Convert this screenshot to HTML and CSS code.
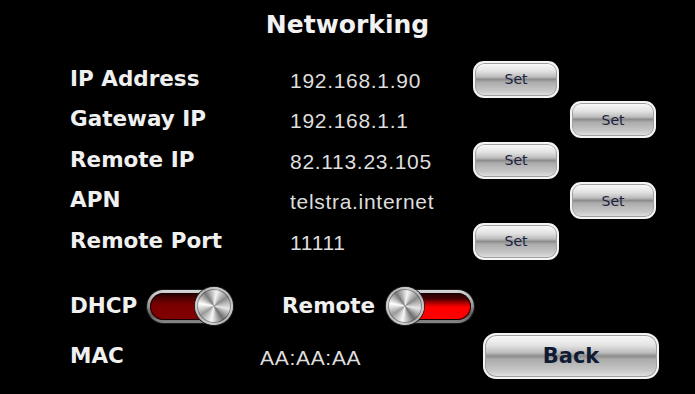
FILE: index.html
```html
<!DOCTYPE html>
<html>
<head>
<meta charset="utf-8">
<link rel="stylesheet" href="styles.css">
</head>
<body>
<div class="screen">
  <h1 class="title">Networking</h1>
  <div class="rows">
    <div class="label">IP Address</div><div class="value">192.168.1.90</div><div class="cell c1"><button class="btn">Set</button></div><div class="cell c2"></div>
    <div class="label">Gateway IP</div><div class="value">192.168.1.1</div><div class="cell c1"></div><div class="cell c2"><button class="btn">Set</button></div>
    <div class="label">Remote IP</div><div class="value">82.113.23.105</div><div class="cell c1"><button class="btn">Set</button></div><div class="cell c2"></div>
    <div class="label">APN</div><div class="value">telstra.internet</div><div class="cell c1"></div><div class="cell c2"><button class="btn">Set</button></div>
    <div class="label">Remote Port</div><div class="value">11111</div><div class="cell c1"><button class="btn">Set</button></div><div class="cell c2"></div>
  </div>
  <div class="toggles">
    <div class="label tl-dhcp">DHCP</div>
    <div class="toggle on-right">
      <div class="track"><div class="fill dark"></div></div>
      <div class="knob"></div>
    </div>
    <div class="label tl-remote">Remote</div>
    <div class="toggle on-left">
      <div class="knob"></div>
      <div class="track"><div class="fill bright"></div></div>
    </div>
  </div>
  <div class="bottom">
    <div class="label mac">MAC</div>
    <div class="value macval">AA:AA:AA</div>
    <button class="back">Back</button>
  </div>
</div>
</body>
</html>
```
FILE: styles.css
```css
html, body {
  margin: 0;
  padding: 0;
  background: #000;
}
.screen {
  width: 695px;
  height: 394px;
  background: #000;
  overflow: hidden;
}
.title {
  margin: 0;
  height: 60px;
  box-sizing: border-box;
  padding-top: 12px;
  text-align: center;
  font: bold 25px/25px "DejaVu Sans", sans-serif;
  color: #f2f2f2;
}
.rows {
  display: grid;
  grid-template-columns: 220px 183px 97px 86px;
  grid-auto-rows: 40.5px;
  padding-left: 70px;
  align-items: center;
}
.label {
  font: bold 21.5px/24px "DejaVu Sans", sans-serif;
  color: #f0f0f0;
  margin-bottom: 3px;
  white-space: nowrap;
}
.value {
  font: 21px/24px "Liberation Sans", sans-serif;
  color: #dedede;
  white-space: nowrap;
  letter-spacing: 0.7px;
  margin-top: 1px;
}
.cell {
  display: flex;
  align-items: center;
  height: 40.5px;
}
.btn {
  width: 86px;
  height: 37px;
  box-sizing: border-box;
  margin: 0 0 2px 0;
  padding: 0;
  border: 2px solid #f4f4f4;
  border-radius: 11px;
  background: linear-gradient(to bottom, #fbfbfb 0%, #e2e2e2 25%, #bdbdbd 42%, #8c8c8c 50%, #acacac 58%, #c8c8c8 85%, #e4e4e4 100%);
  box-shadow: inset 0 0 0 1px #a0a0a0;
  font: 14px "DejaVu Sans", sans-serif;
  color: #1b2140;
  display: flex;
  align-items: center;
  justify-content: center;
}
.toggles {
  display: flex;
  align-items: center;
  height: 44px;
  margin-top: 21.5px;
  padding-left: 70px;
}
.tl-dhcp {
  width: 77px;
  margin-bottom: 0;
}
.tl-remote {
  width: 104px;
  margin-left: 48px;
  margin-bottom: 0;
}
.toggle {
  display: flex;
  align-items: center;
  width: 87px;
  height: 40px;
}
.track {
  width: 78px;
  height: 33px;
  box-sizing: border-box;
  padding: 3px;
  border-radius: 17px;
  background: linear-gradient(to bottom, #d8d8d8 0%, #9a9a9a 45%, #5a5a5a 75%, #8a8a8a 100%);
  box-shadow: 0 0 0 1px #1a1a1a;
  flex-shrink: 0;
}
.fill {
  height: 100%;
  border-radius: 14px;
  box-shadow: inset 0 0 0 1px #1a0000;
}
.fill.dark {
  background: linear-gradient(to bottom, #220000 0%, #5a0000 25%, #7c0000 45%, #820000 100%);
}
.fill.bright {
  background: linear-gradient(to bottom, #1e0000 0%, #4a0000 22%, #c00000 40%, #ff0000 52%, #ff0000 100%);
}
.knob {
  width: 38px;
  height: 38px;
  border-radius: 50%;
  flex-shrink: 0;
  position: relative;
  z-index: 1;
  background: conic-gradient(from 10deg, #f4f4f4, #8a8a8a, #e8e8e8, #6e6e6e, #f8f8f8, #9a9a9a, #ffffff, #7a7a7a, #f4f4f4);
  box-shadow: 0 0 0 1px #202020, inset 0 0 0 2px rgba(255,255,255,0.55), inset 0 0 0 3px rgba(60,60,60,0.5);
}
.on-right .knob {
  margin-left: -30px;
}
.on-left .track {
  margin-left: -30px;
  width: 80px;
}
.bottom {
  display: flex;
  align-items: center;
  height: 46px;
  margin-top: 5px;
  padding-left: 70px;
}
.mac {
  width: 190px;
  margin-bottom: 0;
}
.macval {
  width: 223px;
  margin-top: 3px;
}
.back {
  width: 176px;
  height: 46px;
  box-sizing: border-box;
  margin: 0;
  padding: 0;
  border: 2px solid #f4f4f4;
  border-radius: 13px;
  background: linear-gradient(to bottom, #fbfbfb 0%, #e2e2e2 25%, #bdbdbd 42%, #8c8c8c 50%, #acacac 58%, #c8c8c8 85%, #e4e4e4 100%);
  box-shadow: inset 0 0 0 1px #a0a0a0;
  font: bold 21px "DejaVu Sans", sans-serif;
  color: #111a33;
  display: flex;
  align-items: center;
  justify-content: center;
}
```
